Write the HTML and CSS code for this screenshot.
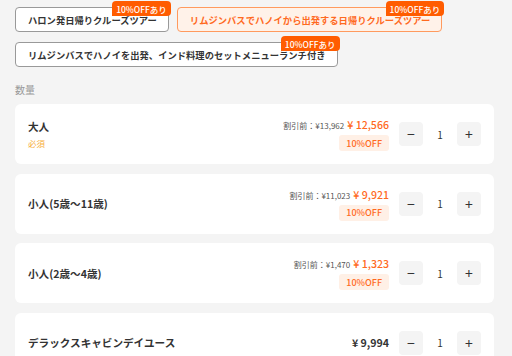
FILE: index.html
```html
<!DOCTYPE html>
<html lang="ja">
<head>
<meta charset="utf-8">
<link rel="stylesheet" href="styles.css">
</head>
<body>
<div class="page">
  <div class="chips">
    <div class="chip">ハロン発日帰りクルーズツアー<span class="tag">10%OFFあり</span></div>
    <div class="chip active">リムジンバスでハノイから出発する日帰りクルーズツアー<span class="tag">10%OFFあり</span></div>
    <div class="chip">リムジンバスでハノイを出発、インド料理のセットメニューランチ付き<span class="tag">10%OFFあり</span></div>
  </div>
  <div class="label">数量</div>
  <div class="cards">
    <div class="card">
      <div class="info">
        <div class="title">大人</div>
        <div class="req">必須</div>
      </div>
      <div class="price">
        <div class="line"><span class="orig">割引前：¥13,962</span><span class="now">¥ 12,566</span></div>
        <span class="off">10%OFF</span>
      </div>
      <div class="stepper"><span class="btn">−</span><span class="qty">1</span><span class="btn">+</span></div>
    </div>
    <div class="card">
      <div class="info"><div class="title">小人(5歳～11歳)</div></div>
      <div class="price">
        <div class="line"><span class="orig">割引前：¥11,023</span><span class="now">¥ 9,921</span></div>
        <span class="off">10%OFF</span>
      </div>
      <div class="stepper"><span class="btn">−</span><span class="qty">1</span><span class="btn">+</span></div>
    </div>
    <div class="card">
      <div class="info"><div class="title">小人(2歳～4歳)</div></div>
      <div class="price">
        <div class="line"><span class="orig">割引前：¥1,470</span><span class="now">¥ 1,323</span></div>
        <span class="off">10%OFF</span>
      </div>
      <div class="stepper"><span class="btn">−</span><span class="qty">1</span><span class="btn">+</span></div>
    </div>
    <div class="card">
      <div class="info"><div class="title">デラックスキャビンデイユース</div></div>
      <div class="price">
        <div class="line"><span class="plain">¥ 9,994</span></div>
      </div>
      <div class="stepper"><span class="btn">−</span><span class="qty">1</span><span class="btn">+</span></div>
    </div>
  </div>
</div>
</body>
</html>
```

FILE: styles.css
```css
* { box-sizing: border-box; }
html, body { margin: 0; padding: 0; background: #f4f4f4; }
body {
  font-family: "Noto Sans CJK JP", "Noto Sans", sans-serif;
  color: #333;
  overflow: hidden;
}
.page { padding: 7px 18px 0 15px; }
.chips {
  display: flex;
  flex-wrap: wrap;
  column-gap: 8px;
  row-gap: 10px;
}
.chip {
  position: relative;
  height: 25px;
  padding: 0 11px 0 12px;
  display: flex;
  align-items: center;
  border: 1px solid #999;
  border-radius: 4px;
  background: #fff;
  font-size: 9.3px;
  font-weight: 700;
  color: #333;
  white-space: nowrap;
}
.chip.active {
  border-color: #ff9a5e;
  background: #fff2e9;
  color: #ff6a1f;
}
.tag {
  position: absolute;
  top: -7px;
  right: -3px;
  height: 15px;
  padding: 0 4px;
  display: flex;
  align-items: center;
  background: #ff5c00;
  color: #fff;
  font-size: 8.5px;
  font-weight: 500;
  border-radius: 4px 4px 4px 0;
}
.label {
  margin-top: 15px;
  font-size: 10px;
  color: #999;
  height: 16px;
  line-height: 16px;
}
.cards {
  margin-top: 6px;
  display: flex;
  flex-direction: column;
  gap: 9.5px;
}
.card {
  height: 60px;
  background: #fff;
  border-radius: 6px;
  display: flex;
  align-items: center;
  padding: 0 13px 0 13px;
}
.info { flex: 1; }
.title {
  font-size: 10.6px;
  font-weight: 700;
  color: #333;
}
.req {
  margin-top: 3px;
  font-size: 8.5px;
  color: #f7b040;
}
.price {
  display: flex;
  flex-direction: column;
  align-items: flex-end;
  margin-right: 10px;
}
.line {
  display: flex;
  align-items: baseline;
  gap: 3px;
}
.orig {
  font-size: 8px;
  color: #555;
}
.now {
  font-size: 10.6px;
  color: #ff6a1f;
  font-weight: 500;
}
.plain {
  font-size: 10.6px;
  color: #333;
  font-weight: 700;
}
.off {
  margin-top: 3px;
  height: 16px;
  padding: 0 7px;
  display: flex;
  align-items: center;
  background: #fff0e6;
  color: #ff6a1f;
  font-size: 9px;
  font-weight: 500;
  border-radius: 3px;
}
.stepper {
  display: flex;
  align-items: center;
}
.btn {
  width: 24px;
  height: 24px;
  border-radius: 4px;
  background: #f4f4f4;
  display: flex;
  align-items: center;
  justify-content: center;
  font-size: 14px;
  color: #333;
}
.qty {
  width: 34px;
  text-align: center;
  font-size: 10px;
  color: #333;
}
```
